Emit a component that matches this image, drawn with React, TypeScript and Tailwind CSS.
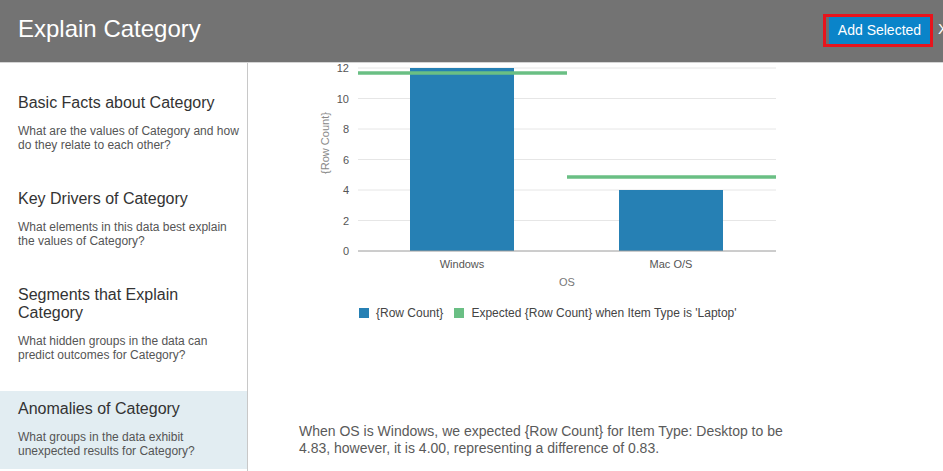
import React from "react";

const items = [
  {
    title: "Basic Facts about Category",
    desc: "What are the values of Category and how do they relate to each other?",
  },
  {
    title: "Key Drivers of Category",
    desc: "What elements in this data best explain the values of Category?",
  },
  {
    title: "Segments that Explain Category",
    desc: "What hidden groups in the data can predict outcomes for Category?",
  },
  {
    title: "Anomalies of Category",
    desc: "What groups in the data exhibit unexpected results for Category?",
    active: true,
  },
];

const summary =
  "When OS is Windows, we expected {Row Count} for Item Type: Desktop to be 4.83, however, it is 4.00, representing a difference of 0.83.";

const ticks = [0, 2, 4, 6, 8, 10, 12];
const y = (v: number) => 196 - v * 15.25;

function Chart() {
  return (
    <svg width="490" height="235" className="block" style={{ fontFamily: '"Liberation Sans", Arial, sans-serif' }}>
      {ticks.map((t) => (
        <g key={t}>
          {t > 0 && <line x1="59" x2="477" y1={y(t)} y2={y(t)} stroke="#e6e6e6" strokeWidth="1" />}
          <text x="50" y={y(t) + 4} textAnchor="end" fontSize="11" fill="#555">
            {t}
          </text>
        </g>
      ))}
      <rect x="111" y={y(12)} width="104" height={y(0) - y(12)} fill="#2680b4" />
      <rect x="320" y={y(4)} width="104" height={y(0) - y(4)} fill="#2680b4" />
      <line x1="59" x2="477" y1={y(0)} y2={y(0)} stroke="#9a9a9a" strokeWidth="1" />
      <line x1="59" x2="268" y1="18" y2="18" stroke="#6abf84" strokeWidth="3.5" />
      <line x1="268" x2="477" y1="122" y2="122" stroke="#6abf84" strokeWidth="3.5" />
      <text x="163" y="213" textAnchor="middle" fontSize="11" fill="#555">
        Windows
      </text>
      <text x="372" y="213" textAnchor="middle" fontSize="11" fill="#555">
        Mac O/S
      </text>
      <text x="268" y="231" textAnchor="middle" fontSize="11" fill="#777">
        OS
      </text>
      <text
        x="0"
        y="0"
        textAnchor="middle"
        fontSize="11"
        fill="#888"
        transform="translate(30 88) rotate(-90)"
      >
        {"{Row Count}"}
      </text>
    </svg>
  );
}

export default function App() {
  return (
    <div className="w-[943px] h-[471px] overflow-hidden bg-white font-['Liberation_Sans',Arial,sans-serif] flex flex-col">
      <header className="h-[63px] shrink-0 bg-[#737373] border-b border-[#d4d4d4] flex items-center pl-[18px] overflow-hidden">
        <h1 className="text-[24px] leading-none text-white -mt-[4px]">Explain Category</h1>
        <div className="ml-auto mr-[-5px] flex items-center gap-[5px] shrink-0">
          <div className="border-[3px] border-[#e8141c] -mt-[2px]">
            <button className="h-[27px] w-[104px] bg-[#0a84c9] border-l-[3px] border-[#6e6e6e] text-white text-[14px] leading-none text-center">
              Add Selected
            </button>
          </div>
          <span className="text-white text-[15px] -mt-[4px]">X</span>
        </div>
      </header>

      <div className="flex flex-1 min-h-0">
        <aside className="w-[248px] shrink-0 border-r border-[#c8c8c8] pt-[22px] flex flex-col gap-[18px]">
          {items.map((it) => (
            <div
              key={it.title}
              className={`pl-[18px] pr-[6px] pt-[9px] pb-[11px] ${it.active ? "bg-[#e2edf2]" : ""}`}
            >
              <div className="text-[16px] leading-[18px] text-[#333]">{it.title}</div>
              <div className="mt-[12px] text-[12px] leading-[14px] text-[#555]">{it.desc}</div>
            </div>
          ))}
        </aside>

        <main className="flex-1 min-w-0 overflow-hidden pl-[51px]">
          <div className="-mt-[8px]">
            <Chart />
          </div>
          <div className="mt-[16px] pl-[60px] flex items-center text-[12px] leading-[14px] text-[#444]">
            <span className="w-[10px] h-[10px] bg-[#2680b4] mr-[7px]" />
            <span>{"{Row Count}"}</span>
            <span className="w-[10px] h-[10px] bg-[#6abf84] ml-[11px] mr-[7px]" />
            <span>{"Expected {Row Count} when Item Type is 'Laptop'"}</span>
          </div>
          <p className="mt-[103px] w-[500px] text-[14px] leading-[17px] text-[#5a5a5a]">{summary}</p>
        </main>
      </div>
    </div>
  );
}
